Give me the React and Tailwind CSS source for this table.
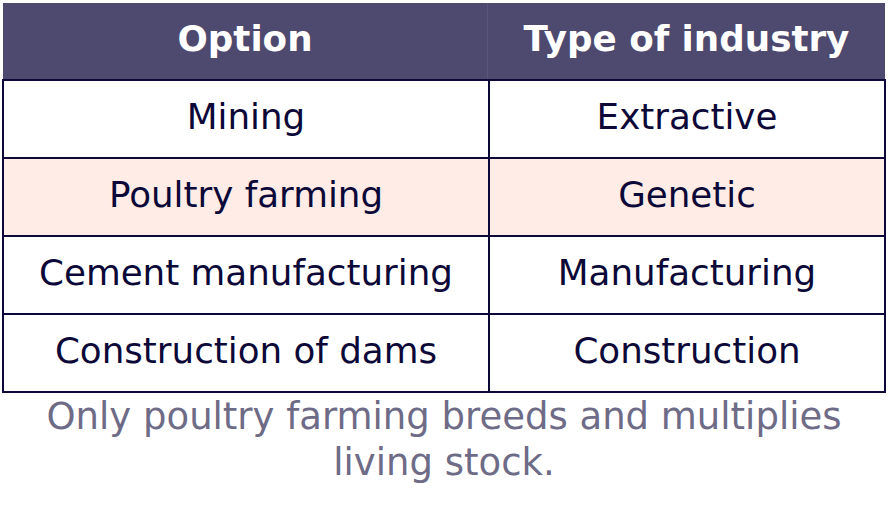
import React from "react";

const rows = [
  { option: "Mining", type: "Extractive", highlight: false },
  { option: "Poultry farming", type: "Genetic", highlight: true },
  { option: "Cement manufacturing", type: "Manufacturing", highlight: false },
  { option: "Construction of dams", type: "Construction", highlight: false },
];

function App() {
  return (
    <div
      className="w-[888px] h-[516px] bg-white pt-[3px] px-[2px]"
      style={{ fontFamily: '"DejaVu Sans", sans-serif' }}
    >
      {/* Header */}
      <div className="flex h-[76px] mx-[1px] bg-[#4e496f] text-white font-bold text-[35.7px]">
        <div className="w-[485px] flex items-center justify-center border-r border-[#5a5579] pb-[5px]">
          Option
        </div>
        <div className="flex-1 flex items-center justify-center pb-[5px]">
          Type of industry
        </div>
      </div>

      {/* Body */}
      <div className="border-x-2 border-b-2 border-[#0c0838] text-[#0c0838] text-[35.7px]">
        {rows.map((row, i) => (
          <div
            key={i}
            className={
              "flex h-[78px] border-t-2 border-[#0c0838] " +
              (row.highlight ? "bg-[#ffece6]" : "bg-white")
            }
          >
            <div className="w-[486px] flex items-center justify-center border-r-2 border-[#0c0838] pb-[5px]">
              {row.option}
            </div>
            <div className="flex-1 flex items-center justify-center pb-[5px]">
              {row.type}
            </div>
          </div>
        ))}
      </div>

      {/* Explanation */}
      <p className="mt-[1px] text-center text-[37px] leading-[46px] text-[#6e6b87] px-[20px]">
        Only poultry farming breeds and multiplies living stock.
      </p>
    </div>
  );
}

export default App;
